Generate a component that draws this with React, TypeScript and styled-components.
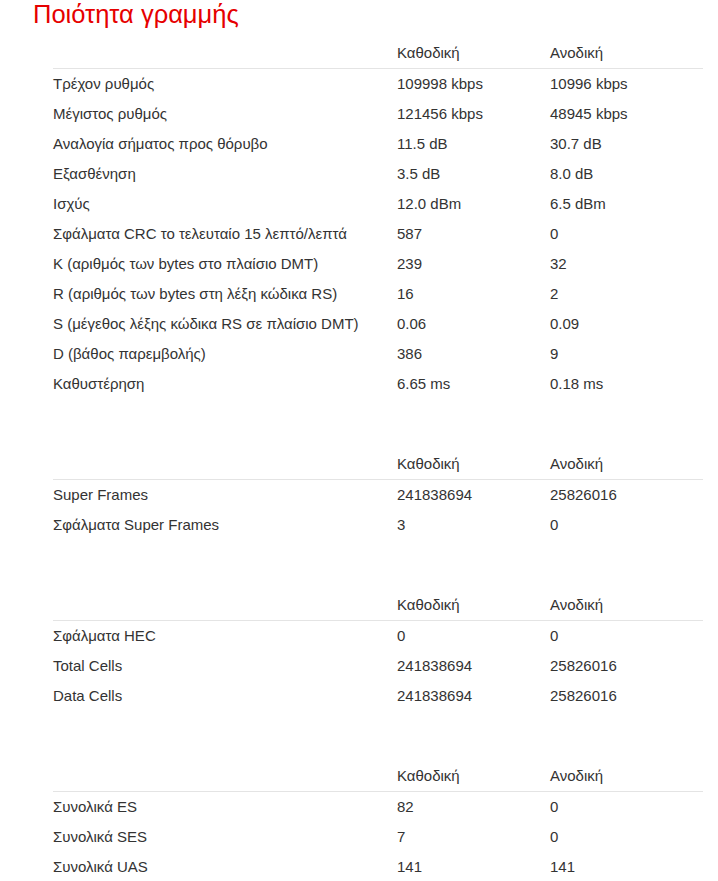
import React from 'react';
import styled, { createGlobalStyle } from 'styled-components';

const GlobalStyle = createGlobalStyle`
    body {
        margin: 0;
        background: #ffffff;
        font-family: "Liberation Sans", Arial, sans-serif;
        color: #333333;
    }
`

const Page = styled.div`
    width: 718px;
    padding-bottom: 20px;
`

const Title = styled.h1`
    margin: 0;
    padding-left: 33px;
    font-size: 25.5px;
    line-height: 28px;
    font-weight: normal;
    color: #e60000;
`

const Sections = styled.div`
    display: flex;
    flex-direction: column;
    gap: 50px;
    margin-top: 10px;
    margin-left: 53px;
    width: 650px;
`

const Table = styled.div`
    display: grid;
    grid-template-columns: 344px 153px 1fr;
    font-size: 15px;
    line-height: 30px;
`

const Cell = styled.div<{ $head?: boolean }>`
    height: 30px;
    white-space: nowrap;
    ${p => p.$head && `
        border-bottom: 1px solid #e4e4e4;
    `}
`

type Row = [string, string, string]

const sections: Row[][] = [
    [
        ['Τρέχον ρυθμός', '109998 kbps', '10996 kbps'],
        ['Μέγιστος ρυθμός', '121456 kbps', '48945 kbps'],
        ['Αναλογία σήματος προς θόρυβο', '11.5 dB', '30.7 dB'],
        ['Εξασθένηση', '3.5 dB', '8.0 dB'],
        ['Ισχύς', '12.0 dBm', '6.5 dBm'],
        ['Σφάλματα CRC το τελευταίο 15 λεπτό/λεπτά', '587', '0'],
        ['K (αριθμός των bytes στο πλαίσιο DMT)', '239', '32'],
        ['R (αριθμός των bytes στη λέξη κώδικα RS)', '16', '2'],
        ['S (μέγεθος λέξης κώδικα RS σε πλαίσιο DMT)', '0.06', '0.09'],
        ['D (βάθος παρεμβολής)', '386', '9'],
        ['Καθυστέρηση', '6.65 ms', '0.18 ms'],
    ],
    [
        ['Super Frames', '241838694', '25826016'],
        ['Σφάλματα Super Frames', '3', '0'],
    ],
    [
        ['Σφάλματα HEC', '0', '0'],
        ['Total Cells', '241838694', '25826016'],
        ['Data Cells', '241838694', '25826016'],
    ],
    [
        ['Συνολικά ES', '82', '0'],
        ['Συνολικά SES', '7', '0'],
        ['Συνολικά UAS', '141', '141'],
    ],
]

export default function App() {
    return (
        <Page>
            <GlobalStyle />
            <Title>Ποιότητα γραμμής</Title>
            <Sections>
                {sections.map((rows, i) => (
                    <Table key={i}>
                        <Cell $head />
                        <Cell $head>Καθοδική</Cell>
                        <Cell $head>Ανοδική</Cell>
                        {rows.map(r => (
                            <React.Fragment key={r[0]}>
                                <Cell>{r[0]}</Cell>
                                <Cell>{r[1]}</Cell>
                                <Cell>{r[2]}</Cell>
                            </React.Fragment>
                        ))}
                    </Table>
                ))}
            </Sections>
        </Page>
    );
}
